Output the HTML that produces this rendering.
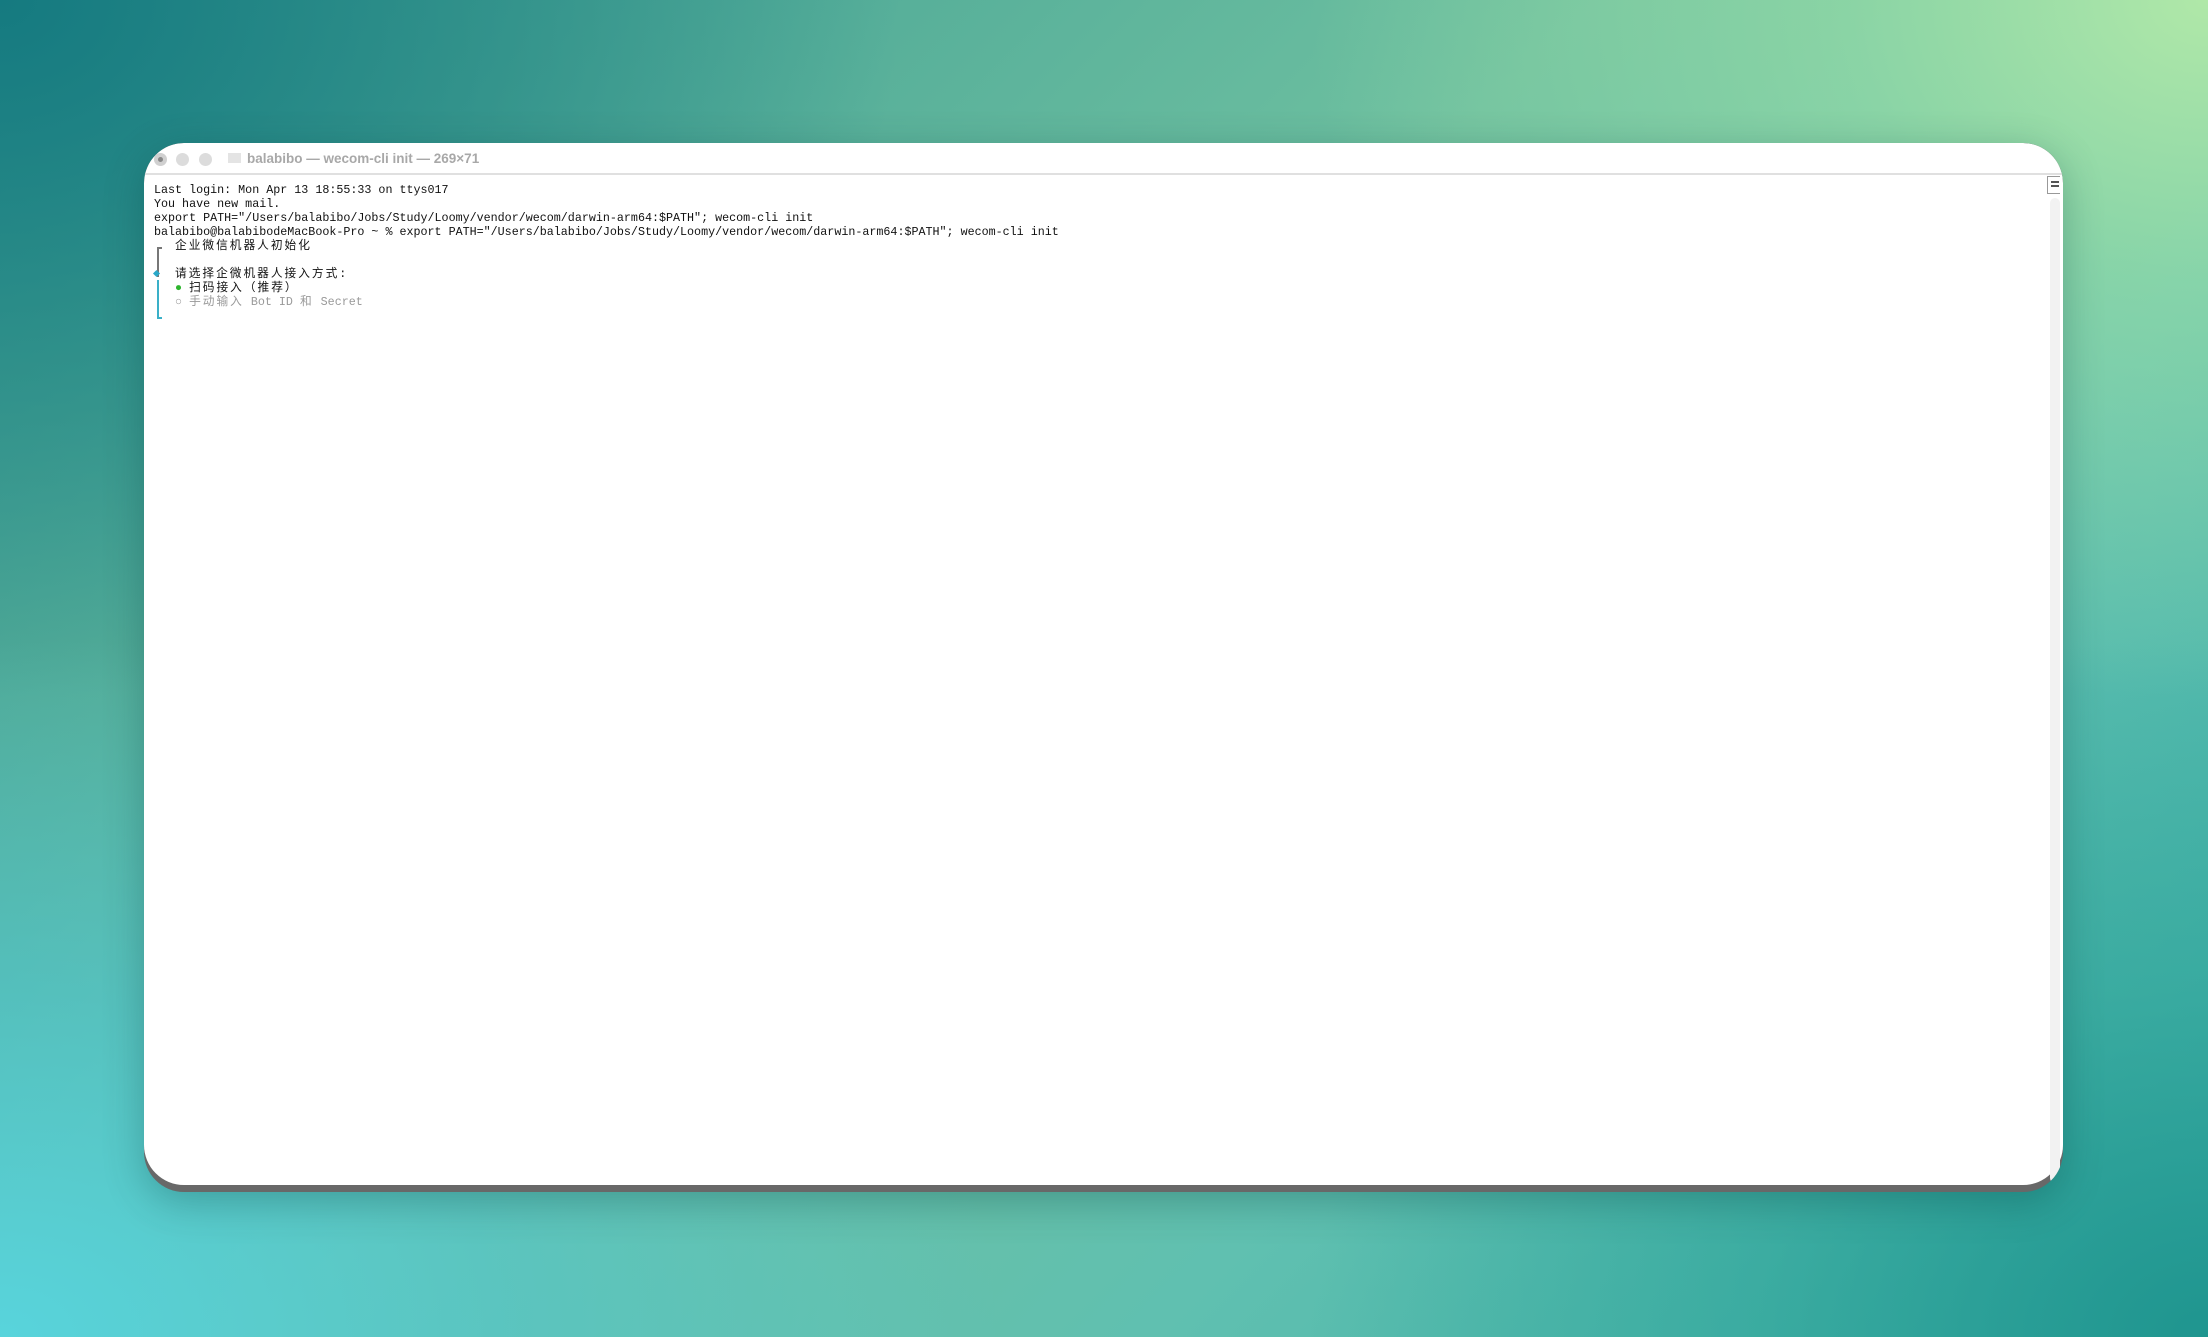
<!DOCTYPE html>
<html><head><meta charset="utf-8"><style>
html,body{margin:0;padding:0}
body{width:2208px;height:1337px;overflow:hidden;position:relative;
background:
radial-gradient(ellipse 900px 700px at 2208px 0px,#b0e8a8 0%,rgba(160,225,165,0.6) 40%,rgba(120,200,160,0) 100%),
radial-gradient(ellipse 1000px 700px at 0px 1337px,#58d4dc 0%,rgba(80,200,210,0.6) 50%,rgba(70,190,200,0) 100%),
radial-gradient(ellipse 900px 700px at 2208px 1337px,#1f958f 0%,rgba(40,160,150,0.5) 50%,rgba(40,160,150,0) 100%),
radial-gradient(ellipse 900px 700px at 0px 0px,#157a80 0%,rgba(30,130,130,0.6) 50%,rgba(30,130,130,0) 100%),
linear-gradient(135deg,#3a9a92 0%,#6ec0a0 45%,#60c0b0 70%,#3fb0a8 100%);}
.win{position:absolute;left:144px;top:143px;width:1919px;height:1049px;border-radius:40px;background:#686868;box-shadow:0 10px 40px rgba(0,60,60,0.3);overflow:hidden}
.inner{position:absolute;left:0;top:0;width:1919px;height:1042px;background:#fff;border-radius:40px}
.title{position:absolute;left:0;top:0;width:100%;height:30px;border-bottom:2px solid #e0e0e0}
.dot{position:absolute;top:10px;width:13px;height:13px;border-radius:50%;background:#dcdcdc}
.ttxt{position:absolute;left:103px;top:8px;font:bold 13.5px "Liberation Sans",sans-serif;color:#a8a8a8}
.fold{position:absolute;left:84px;top:10px;width:13px;height:10px;background:#e4e4e4}
.term{position:absolute;left:10px;top:40px;font:11.7px/14px "Liberation Mono","Noto Sans CJK SC",monospace;color:#111;white-space:pre}
.cj{letter-spacing:2px}
.g{color:#999}
</style></head><body>
<div class="win"><div class="inner">
<div class="title">
<div class="dot" style="left:10px;background:#d0d0d0"></div><div style="position:absolute;left:14px;top:14px;width:5px;height:5px;border-radius:50%;background:#888"></div>
<div class="dot" style="left:32px"></div>
<div class="dot" style="left:55px"></div>
<div class="fold"></div>
<div class="ttxt">balabibo — wecom-cli init — 269×71</div>
</div>
<div class="term">Last login: Mon Apr 13 18:55:33 on ttys017
You have new mail.
export PATH="/Users/balabibo/Jobs/Study/Loomy/vendor/wecom/darwin-arm64:$PATH"; wecom-cli init
balabibo@balabibodeMacBook-Pro ~ % export PATH="/Users/balabibo/Jobs/Study/Loomy/vendor/wecom/darwin-arm64:$PATH"; wecom-cli init
   <span class="cj">企业微信机器人初始化</span>

   <span class="cj">请选择企微机器人接入方式:</span>
   <span style="color:#2db52d">●</span> <span class="cj">扫码接入（推荐）</span>
   <span class="g">○ <span class="cj">手动输入</span> Bot ID <span class="cj">和</span> Secret</span></div>
<div style="position:absolute;left:13px;top:104px;width:1.5px;height:30px;background:#777"></div>
<div style="position:absolute;left:13px;top:104px;width:5px;height:1.5px;background:#777"></div>
<div style="position:absolute;left:10px;top:128px;width:5px;height:5px;background:#2aa8c8;transform:rotate(45deg)"></div>
<div style="position:absolute;left:13px;top:137px;width:1.5px;height:38px;background:#3ab0c8"></div>
<div style="position:absolute;left:13px;top:174px;width:5px;height:1.5px;background:#3ab0c8"></div>
<div style="position:absolute;left:1903px;top:33px;width:12px;height:16px;border:1px solid #999;border-right:none;background:#fff"></div>
<div style="position:absolute;left:1907px;top:38px;width:8px;height:2px;background:#555"></div>
<div style="position:absolute;left:1907px;top:42px;width:8px;height:2px;background:#555"></div>
<div style="position:absolute;left:1906px;top:55px;width:10px;height:985px;background:#f2f2f2;border-radius:5px"></div>
</div></div>
</body></html>
